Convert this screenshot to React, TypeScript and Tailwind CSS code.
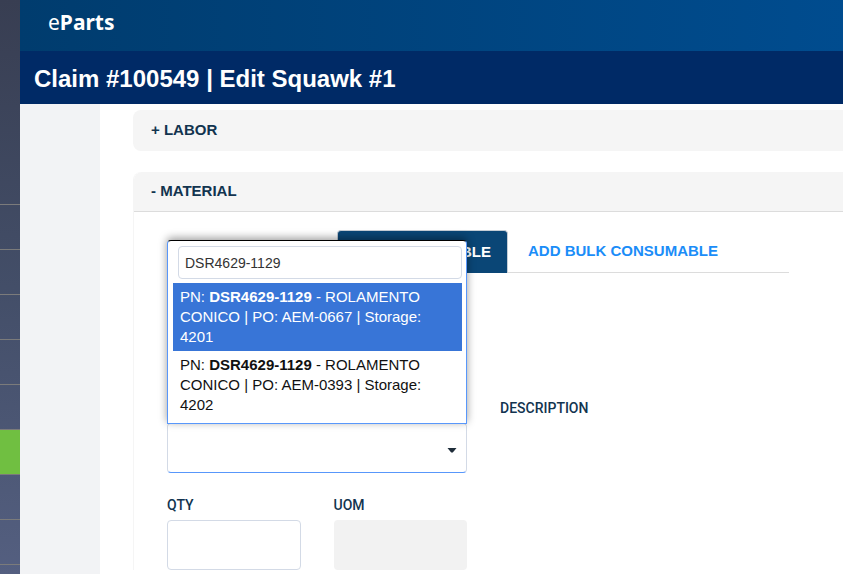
import type { ReactNode } from "react";

const navRows = ["n1", "n2", "n3", "n4", "n5", "active", "n6", "n7", "n8"];

const parts = [
  { pn: "DSR4629-1129", name: "ROLAMENTO CONICO", po: "AEM-0667", storage: "4201" },
  { pn: "DSR4629-1129", name: "ROLAMENTO CONICO", po: "AEM-0393", storage: "4202" },
];

function Sidebar() {
  return (
    <nav className="w-5 shrink-0 overflow-hidden bg-linear-to-b from-[#383e52] via-[#434e68] to-[#545f80] pt-[204px]">
      {navRows.map((row) => (
        <div
          key={row}
          className={`h-[45px] border-t border-[#7b7b7b] ${row === "active" ? "bg-[#70bf41]" : ""}`}
        />
      ))}
    </nav>
  );
}

function FieldLabel({ htmlFor, children }: { htmlFor: string; children: ReactNode }) {
  return (
    <label
      htmlFor={htmlFor}
      className="block font-[Roboto,'Liberation_Sans',sans-serif] text-sm leading-5 font-medium text-[#12344f]"
    >
      {children}
    </label>
  );
}

function PartMenu() {
  return (
    <div className="absolute inset-x-0 bottom-[49px] z-10 rounded-t border border-[#5897fb] border-t-black bg-white pt-[5px] pr-1 pb-1 pl-[5px] shadow-[0_-2px_9px_rgba(0,0,0,0.4)]">
      <input
        type="search"
        aria-label="Search parts"
        defaultValue="DSR4629-1129"
        className="ml-[5px] block h-[33px] w-[284px] rounded border border-[#d3dae6] px-1.5 text-sm text-[#333] outline-none"
      />
      <ul role="listbox" className="mt-1 text-[15px] leading-5">
        {parts.map((part, i) => (
          <li
            key={part.storage}
            role="option"
            aria-selected={i === 0}
            className={`px-[7px] py-1 ${i === 0 ? "bg-[#3875d7] text-white" : "text-[#111]"}`}
          >
            PN: <b>{part.pn}</b>
            {` - ${part.name} | PO: ${part.po} | Storage: ${part.storage}`}
          </li>
        ))}
      </ul>
    </div>
  );
}

export default function App() {
  return (
    <div className="flex h-screen overflow-hidden bg-white font-['Liberation_Sans',Arial,sans-serif]">
      <Sidebar />
      <div className="flex min-w-0 flex-1 flex-col">
        <header className="h-[51px] shrink-0 bg-linear-to-r from-[#003c6e] to-[#004c8f] px-7 pt-1.5 font-['Noto_Sans','Open_Sans',sans-serif] text-[21px] leading-8 text-white">
          e<span className="font-bold">Parts</span>
        </header>
        <div className="flex h-[53px] shrink-0 items-center bg-[#002a66] px-3.5 pt-0.5">
          <h1 className="text-2xl font-bold text-white">Claim #100549 | Edit Squawk #1</h1>
        </div>

        <div className="flex min-h-0 flex-1">
          <div className="w-20 shrink-0 bg-[#f2f3f5]" />
          <main className="min-w-0 flex-1 pt-1.5 pl-[33px]">
            <button
              type="button"
              className="block h-[41px] w-full rounded-l-lg bg-[#f5f5f5] px-[18px] text-left text-[15px] font-bold text-[#12344f]"
            >
              + LABOR
            </button>

            <section className="mt-[21px] rounded-tl-lg border-l border-[#f5f5f5]">
              <button
                type="button"
                className="block h-10 w-full rounded-tl-lg border-b border-[#dcdcdc] bg-[#f5f5f5] px-[17px] text-left text-[15px] font-bold text-[#12344f]"
              >
                - MATERIAL
              </button>

              <div className="mr-[54px] pt-[18px] pl-[33px]">
                <div role="tablist" className="flex h-[43px] border-b border-[#dcdcdc] text-[15px] font-bold">
                  <div className="w-[170px] shrink-0" />
                  <button
                    type="button"
                    role="tab"
                    aria-selected="true"
                    className="-mb-px w-[171px] shrink-0 rounded-t border border-b-0 border-[#c5cdd5] bg-[#0a4676] pr-4 text-right text-white"
                  >
                    ADD REPAIRABLE
                  </button>
                  <button type="button" role="tab" className="shrink-0 px-5 text-[#1b8df8]">
                    ADD BULK CONSUMABLE
                  </button>
                </div>

                <div className="mt-[125px] grid grid-cols-[300px_1fr] gap-x-[33px]">
                  <div>
                    <div className="h-5" />
                    <div className="relative mt-[5px]">
                      <select
                        aria-label="Part number"
                        className="block h-[50px] w-full appearance-none rounded border border-[#d3dae6] border-b-[#5897fb] bg-white px-3 text-sm outline-none"
                      />
                      <svg
                        viewBox="0 0 10 5"
                        className="pointer-events-none absolute top-[25px] right-2.5 h-[5px] w-[10px] fill-[#1f2d3a]"
                      >
                        <path d="M0.5 0h9L5.8 4.5h-1.6z" />
                      </svg>
                      <PartMenu />
                    </div>
                    <div className="mt-[22px] grid grid-cols-2 gap-x-[33px]">
                      <div>
                        <FieldLabel htmlFor="qty">QTY</FieldLabel>
                        <input
                          id="qty"
                          className="mt-[5px] block h-[50px] w-full rounded border border-[#d3dae6] px-3 text-sm"
                        />
                      </div>
                      <div>
                        <FieldLabel htmlFor="uom">UOM</FieldLabel>
                        <input
                          id="uom"
                          disabled
                          className="mt-[5px] block h-[50px] w-full rounded bg-[#f2f2f2] px-3 text-sm"
                        />
                      </div>
                    </div>
                  </div>
                  <div>
                    <FieldLabel htmlFor="description">DESCRIPTION</FieldLabel>
                    <input id="description" disabled className="mt-[5px] block h-[50px] w-full bg-white" />
                  </div>
                </div>
              </div>
            </section>
          </main>
        </div>
      </div>
    </div>
  );
}
